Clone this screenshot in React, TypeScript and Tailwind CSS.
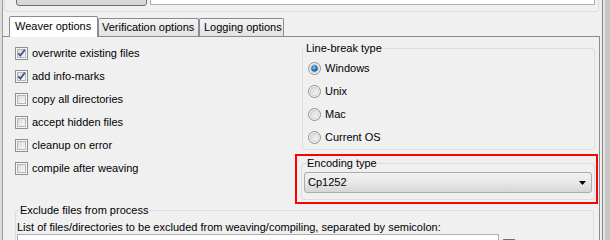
import React from "react";

const CheckBox = ({ checked }: { checked?: boolean }) => (
  <svg width="13" height="13" viewBox="0 0 13 13" className="shrink-0">
    <defs>
      <linearGradient id="cbFill" x1="0" y1="0" x2="1" y2="1">
        <stop offset="0" stopColor="#d8d8d8" />
        <stop offset="1" stopColor="#fbfbfb" />
      </linearGradient>
    </defs>
    <rect x="0.5" y="0.5" width="12" height="12" fill="#f6f6f6" stroke="#8e8f8f" />
    <rect x="2.5" y="2.5" width="8" height="8" fill="url(#cbFill)" stroke="#b4b7bb" />
    {checked && (
      <path d="M3.2 6.2 L5.4 8.6 L9.8 2.8" stroke="#3a4f8c" strokeWidth="1.7" fill="none" />
    )}
  </svg>
);

const Radio = ({ checked }: { checked?: boolean }) => (
  <svg width="13" height="13" viewBox="0 0 13 13" className="shrink-0">
    <defs>
      <linearGradient id="rbFill" x1="0" y1="0" x2="1" y2="1">
        <stop offset="0" stopColor="#d6d6d6" />
        <stop offset="1" stopColor="#fafafa" />
      </linearGradient>
      <radialGradient id="rbDot" cx="0.4" cy="0.35" r="0.7">
        <stop offset="0" stopColor="#8ed0f8" />
        <stop offset="0.5" stopColor="#2a86d0" />
        <stop offset="1" stopColor="#0d4d8c" />
      </radialGradient>
    </defs>
    <circle cx="6.5" cy="6.5" r="6" fill="#f6f6f6" stroke="#8e8f8f" />
    <circle cx="6.5" cy="6.5" r="4.2" fill="url(#rbFill)" stroke="#c4c6c9" strokeWidth="0.8" />
    {checked && <circle cx="6.5" cy="6.5" r="3" fill="url(#rbDot)" stroke="#1b5e9c" strokeWidth="0.6" />}
  </svg>
);

const GroupTitle = ({ text, left }: { text: string; left: string }) => (
  <span className={`absolute top-[-7px] ${left} px-[1px] bg-[#f0f0f0] leading-[13px]`}>{text}</span>
);

const checks = [
  { label: "overwrite existing files", checked: true },
  { label: "add info-marks", checked: true },
  { label: "copy all directories" },
  { label: "accept hidden files" },
  { label: "cleanup on error" },
  { label: "compile after weaving" },
];

const radios = [
  { label: "Windows", checked: true },
  { label: "Unix" },
  { label: "Mac" },
  { label: "Current OS" },
];

export default function App() {
  return (
    <div className="w-[610px] h-[240px] overflow-hidden flex bg-[#f0f0f0] text-[11px] leading-[13px] text-black font-['Liberation_Sans',Arial,sans-serif]">
      <div className="w-[2px] shrink-0 bg-[#dcdcdc]" />
      <div className="w-[1px] shrink-0 bg-[#9c9c9c]" />

      <div className="w-[597px] shrink-0 flex flex-col">
        {/* cut-off group above the tabs */}
        <div className="flex h-[12px] shrink-0 pl-[1px]">
          <div className="-mt-[20px] h-[32px] w-[595px] border border-[#d5dfe5] rounded-[3px] flex items-start pl-[11px]">
            <div className="w-[131px] h-[25px] border border-[#707070] rounded-[3px] bg-gradient-to-b from-[#f2f2f2] to-[#d4d4d4] flex justify-center pt-[6px]">
              <span className="text-[#222]">Browse output jar...</span>
            </div>
            <div className="ml-[3px] w-[445px] h-[24px] border border-[#abadb3] bg-white pl-[4px] pt-[6px] overflow-hidden whitespace-nowrap">
              C:\workspace\aspectj-project\lib\weaving\output\woven-app.jar
            </div>
          </div>
        </div>

        {/* tabs */}
        <div className="flex items-end h-[24px] shrink-0 pl-[6px]">
          <div className="relative z-10 -mb-[1px] w-[89px] h-[21px] bg-white border-t border-x border-[#898c95] rounded-t-[2px] flex items-center pl-[5px] pb-[1px]">
            Weaver options
          </div>
          <div className="w-[101px] h-[18px] bg-gradient-to-b from-[#f3f3f3] to-[#e3e3e3] border-t border-x border-[#898c95] rounded-t-[2px] flex items-center pl-[3px]">
            Verification options
          </div>
          <div className="w-[85px] h-[18px] bg-gradient-to-b from-[#f3f3f3] to-[#e3e3e3] border-t border-x border-[#898c95] rounded-t-[2px] flex items-center pl-[4px]">
            Logging options
          </div>
        </div>

        {/* tab pane */}
        <div className="flex-1 border-t border-r border-[#898c95] flex flex-col">
          <div className="flex">
            <div className="w-[292px] shrink-0 pl-[12px] pt-[5px] flex flex-col">
              {checks.map((c) => (
                <div key={c.label} className="h-[23px] flex items-center gap-[4px]">
                  <CheckBox checked={c.checked} />
                  <span>{c.label}</span>
                </div>
              ))}
            </div>

            <div className="w-[303px] shrink-0 flex flex-col">
              <div className="relative mt-[11px] ml-[7px] w-[293px] h-[102px] border border-[#d5dfe5] rounded-[3px] pl-[5px] pt-[8px] flex flex-col">
                <GroupTitle text="Line-break type" left="left-[2px]" />
                {radios.map((r) => (
                  <div key={r.label} className="h-[23px] flex items-center gap-[4px]">
                    <Radio checked={r.checked} />
                    <span>{r.label}</span>
                  </div>
                ))}
              </div>

              <div className="mt-[4px] w-[303px] h-[50px] border-2 border-[#ff0000]">
                <div className="relative mt-[7px] ml-[4px] w-[294px] h-[37px] border border-[#d5dfe5] rounded-[3px]">
                  <GroupTitle text="Encoding type" left="left-[4px]" />
                  <div className="mt-[8px] ml-[2px] w-[288px] h-[21px] border border-[#acacac] rounded-[3px] bg-gradient-to-b from-[#f2f2f2] via-[#e8e8e8] to-[#d6d6d6] flex items-center justify-between pl-[3px] pr-[5px]">
                    <span>Cp1252</span>
                    <svg width="7" height="4" viewBox="0 0 7 4">
                      <path d="M0 0 H7 L3.5 4 Z" fill="#000" />
                    </svg>
                  </div>
                </div>
              </div>
            </div>
          </div>

          <div className="relative mt-[6px] ml-[12px] w-[579px] h-[40px] border border-[#d5dfe5] rounded-[3px] pl-[1px] pt-[10px]">
            <GroupTitle text="Exclude files from process" left="left-[3px]" />
            <div className="h-[13px] whitespace-nowrap">
              List of files/directories to be excluded from weaving/compiling, separated by semicolon:
            </div>
            <div className="flex items-start">
              <div className="w-[482px] h-[20px] bg-white border border-[#abadb3]" />
              <div className="ml-[3px] mt-[5px] w-[14px] h-[20px] border border-[#707070] rounded-[2px] bg-gradient-to-b from-[#f2f2f2] to-[#d4d4d4]" />
            </div>
          </div>
        </div>
      </div>

      <div className="w-[2px] shrink-0" />
      <div className="w-[1px] shrink-0 bg-[#858585]" />
      <div className="w-[2px] shrink-0 bg-[#e6e6e6]" />
      <div className="flex-1 bg-[#c6c6c6]" />
    </div>
  );
}
